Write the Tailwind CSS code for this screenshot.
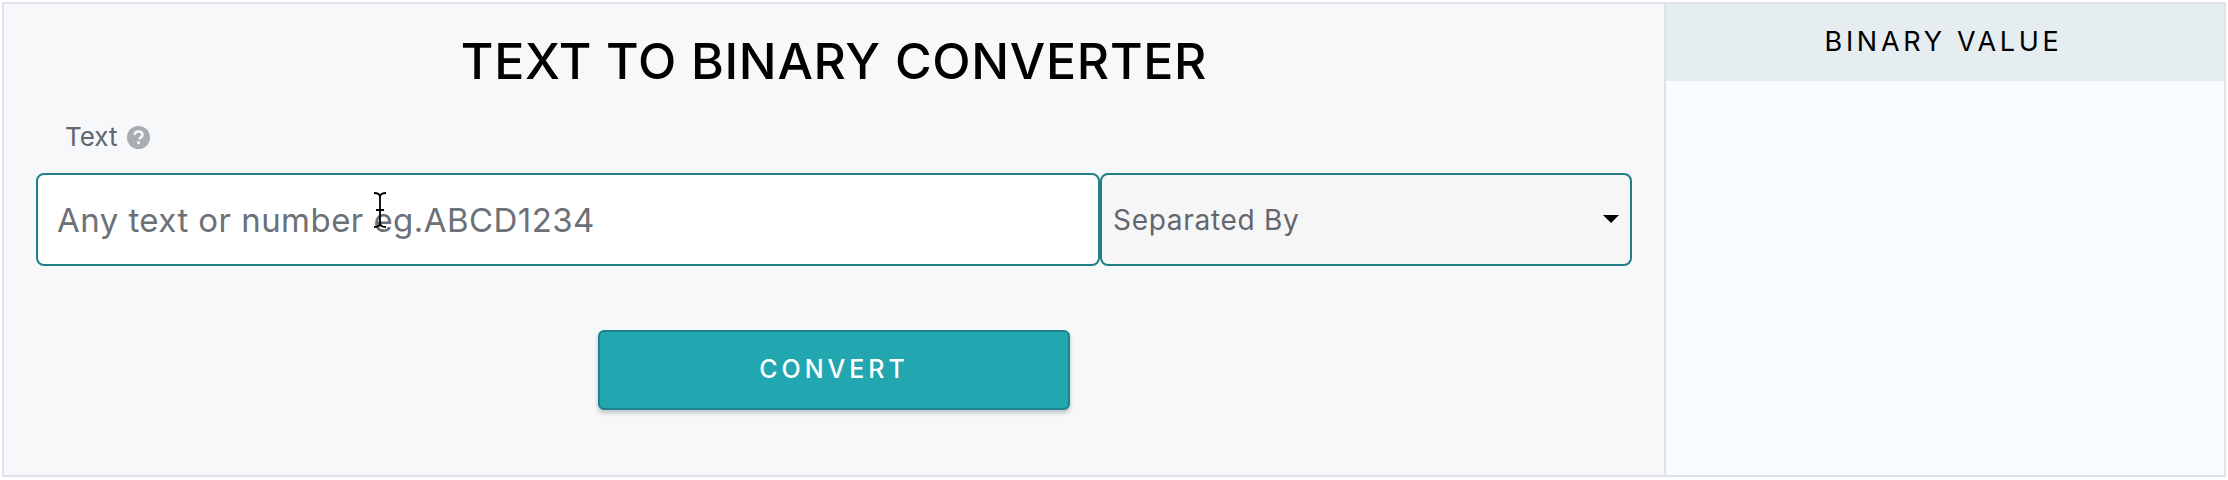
<!DOCTYPE html>
<html lang="en">
<head>
  <meta charset="UTF-8" />
  <title>Text to Binary Converter</title>
  <script src="https://cdn.jsdelivr.net/npm/@tailwindcss/browser@4"></script>
</head>
<body class="bg-white font-['Inter',sans-serif]">
  <div class="relative mx-[2px] mt-[2px] h-[475px] flex border-2 border-[#dfe2ea] bg-[#f6f8fa]">
    <!-- converter form -->
    <div class="w-[1662px] pt-[28px] px-[32px] border-r-2 border-[#dfe2ea]">
      <h1 class="text-center text-[50px] leading-[58px] font-medium tracking-[0.7px] text-black">TEXT TO BINARY CONVERTER</h1>
      <div class="mt-[32px] ml-[29px] flex items-center gap-[9px] h-[30px]">
        <label class="text-[26px] leading-[30px] text-[#62666e]">Text</label>
        <svg class="w-[23px] h-[23px]" viewBox="0 0 24 24">
          <circle cx="12" cy="12" r="12" fill="#a9adb1" />
          <path d="M8 9.5c0-2.4 1.8-3.8 4.1-3.8 2.3 0 4 1.3 4 3.4 0 3-3.1 2.9-3.1 5" fill="none" stroke="#f6f8fa" stroke-width="2.6" />
          <rect x="10.6" y="16" width="2.9" height="2.9" fill="#f6f8fa" />
        </svg>
      </div>
      <div class="mt-[21px] flex">
        <input type="text" placeholder="Any text or number eg.ABCD1234" class="w-[1064px] h-[93px] px-[19px] bg-white border-[2.5px] border-[#217f8a] rounded-[8px] text-[33px] tracking-[0.45px] text-[#62666e] placeholder:text-[#6c7178] outline-none" />
        <div class="relative w-[532px] h-[93px]">
          <select class="w-full h-full appearance-none pl-[11px] bg-[#f6f6f6] border-[2.5px] border-[#217f8a] rounded-[8px] text-[28px] tracking-[0.7px] text-[#62666e] outline-none">
            <option>Separated By</option>
          </select>
          <div class="absolute right-[13px] top-[42px] w-0 h-0 border-x-[8px] border-x-transparent border-t-[8px] border-t-black"></div>
        </div>
      </div>
      <div class="mt-[64px] flex justify-center">
        <button class="w-[472px] h-[80px] bg-[#22a6b0] border-2 border-[#1d8490] rounded-[6px] shadow-[0_3px_5px_rgba(0,0,0,0.22)] text-white text-[25px] font-medium tracking-[4px]">CONVERT</button>
      </div>
    </div>

    <!-- result -->
    <div class="flex-1 flex flex-col bg-[#f8fcff]">
      <div class="h-[77px] pr-[3px] flex items-center justify-center bg-[#e6edf0] text-black text-[27px] tracking-[3.7px]">BINARY VALUE</div>
    </div>

    <!-- mouse cursor in the screenshot -->
    <svg class="absolute left-[368px] top-[188px] w-[16px] h-[36px]" viewBox="0 0 16 36" fill="none" stroke="#000" stroke-width="1.8">
      <path d="M2 1c3 0 6 1 6 4v26c0 3-3 4-6 4M14 1c-3 0-6 1-6 4v26c0 3 3 4 6 4M4 18h8" />
    </svg>
  </div>
</body>
</html>
